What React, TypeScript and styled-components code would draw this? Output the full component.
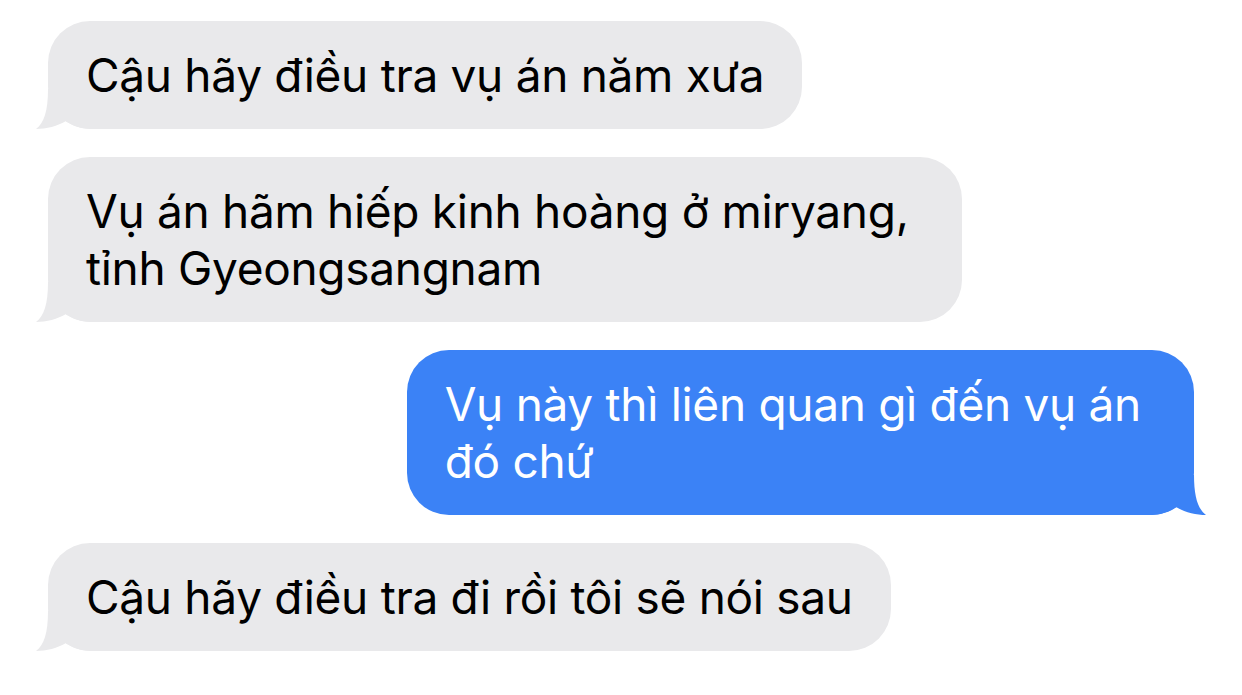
import styled, { createGlobalStyle } from 'styled-components';

const GlobalStyle = createGlobalStyle`
  html, body {
    margin: 0;
    padding: 0;
    background: #ffffff;
  }
`;

const GRAY = '#e9e9eb';
const BLUE = '#3b82f6';

interface Message {
  text: string[];
  mine?: boolean;
}

const MESSAGES: Message[] = [
  { text: ['Cậu hãy điều tra vụ án năm xưa'] },
  { text: ['Vụ án hãm hiếp kinh hoàng ở miryang,', 'tỉnh Gyeongsangnam'] },
  { text: ['Vụ này thì liên quan gì đến vụ án', 'đó chứ'], mine: true },
  { text: ['Cậu hãy điều tra đi rồi tôi sẽ nói sau'] },
];

function Tail({ mine }: { mine?: boolean }) {
  return (
    <TailSvg $mine={mine} width='56' height='40' viewBox='0 0 56 40'>
      <path
        d='M12 0 C12 22 8 34 0 40 C10 40 22 37 30 32 C36 36 44 40 56 40 L56 0 Z'
        fill={mine ? BLUE : GRAY}
      />
    </TailSvg>
  );
}

export default function App(): JSX.Element {
  return (
    <>
      <GlobalStyle />
      <Thread>
        {MESSAGES.map((m, i) => (
          <Row key={i} $mine={m.mine}>
            <Bubble $mine={m.mine} $wrapped={m.text.length > 1}>
              {m.text.map((line, j) => (
                <Line key={j}>{line}</Line>
              ))}
              <Tail mine={m.mine} />
            </Bubble>
          </Row>
        ))}
      </Thread>
    </>
  );
}

const Thread = styled.div`
  display: flex;
  flex-direction: column;
  gap: 28px;
  padding: 21px 48px 0 48px;
  width: 1242px;
  box-sizing: border-box;
`;

const Row = styled.div<{ $mine?: boolean }>`
  display: flex;
  justify-content: ${(p) => (p.$mine ? 'flex-end' : 'flex-start')};
`;

const Bubble = styled.div<{ $mine?: boolean; $wrapped?: boolean }>`
  position: relative;
  display: flex;
  flex-direction: column;
  padding: 26px ${(p) => (p.$wrapped ? '53px' : '38px')} 25px 38px;
  border-radius: 42px;
  background: ${(p) => (p.$mine ? BLUE : GRAY)};
  color: ${(p) => (p.$mine ? '#ffffff' : '#000000')};
  font-family: Inter, 'Noto Sans', sans-serif;
  font-size: 46px;
  line-height: 57px;
  letter-spacing: -0.3px;
`;

const Line = styled.span`
  position: relative;
  z-index: 1;
  white-space: nowrap;
`;

const TailSvg = styled.svg<{ $mine?: boolean }>`
  position: absolute;
  bottom: 0;
  ${(p) => (p.$mine ? 'right: -12px; transform: scaleX(-1);' : 'left: -12px;')}
`;
